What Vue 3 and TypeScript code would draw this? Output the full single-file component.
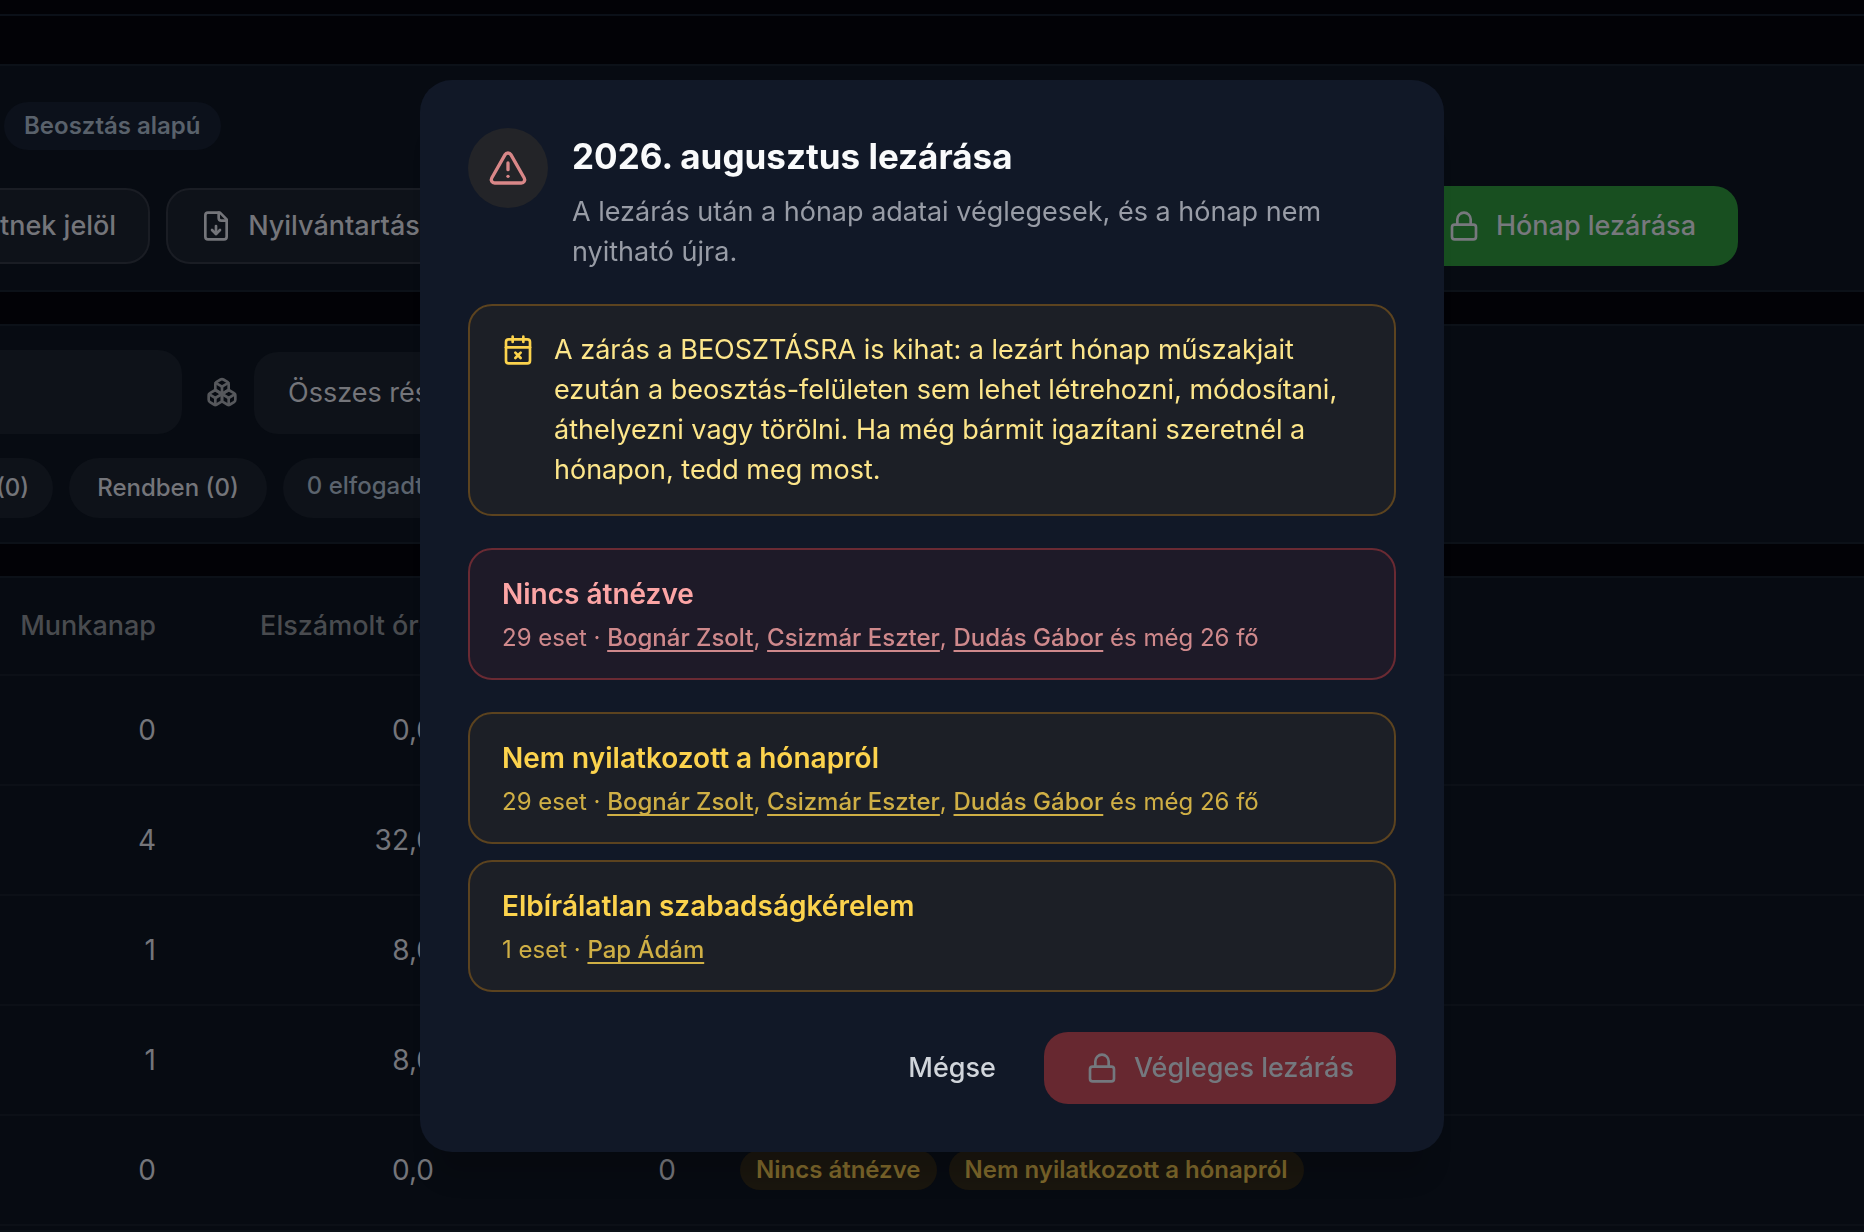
<script setup lang="ts">
interface Issue {
  title: string
  count: number
  people: string[]
  rest?: string
}

interface Row {
  days: number
  hours: string
  absences?: number
  flags?: string[]
}

const blocking: Issue[] = [
  {
    title: 'Nincs átnézve',
    count: 29,
    people: ['Bognár Zsolt', 'Csizmár Eszter', 'Dudás Gábor'],
    rest: 'és még 26 fő',
  },
]

const warnings: Issue[] = [
  {
    title: 'Nem nyilatkozott a hónapról',
    count: 29,
    people: ['Bognár Zsolt', 'Csizmár Eszter', 'Dudás Gábor'],
    rest: 'és még 26 fő',
  },
  { title: 'Elbírálatlan szabadságkérelem', count: 1, people: ['Pap Ádám'] },
]

const groups = [
  { kind: 'danger', issues: blocking },
  { kind: 'warning', issues: warnings },
]

const rows: Row[] = [
  { days: 0, hours: '0,0' },
  { days: 4, hours: '32,0' },
  { days: 1, hours: '8,0' },
  { days: 1, hours: '8,0' },
  {
    days: 0,
    hours: '0,0',
    absences: 0,
    flags: ['Nincs átnézve', 'Nem nyilatkozott a hónapról'],
  },
]
</script>

<template>
  <div class="page">
    <header class="topbar"></header>

    <main class="content">
      <section class="panel summary">
        <span class="tag">Beosztás alapú</span>
        <div class="actions">
          <button type="button" class="outline cut">tnek jelöl</button>
          <button type="button" class="outline export">
            <svg class="icon" viewBox="0 0 24 24" aria-hidden="true">
              <path d="M15 2H6a2 2 0 0 0-2 2v16a2 2 0 0 0 2 2h12a2 2 0 0 0 2-2V7Z" />
              <path d="M14 2v4a2 2 0 0 0 2 2h4" />
              <path d="M12 18v-6" />
              <path d="m9 15 3 3 3-3" />
            </svg>
            Nyilvántartás
          </button>
          <button type="button" class="close-month">
            <svg class="icon" viewBox="0 0 24 24" aria-hidden="true">
              <rect x="3" y="11" width="18" height="11" rx="2" />
              <path d="M7 11V7a5 5 0 0 1 10 0v4" />
            </svg>
            Hónap lezárása
          </button>
        </div>
      </section>

      <section class="panel filters">
        <div class="fields">
          <input type="text" class="search" aria-label="Keresés" />
          <svg class="icon boxes" viewBox="0 0 24 24" aria-hidden="true">
            <path d="M2.97 12.92A2 2 0 0 0 2 14.63v3.24a2 2 0 0 0 .97 1.71l3 1.8a2 2 0 0 0 2.06 0L12 19v-5.5l-5-3-4.03 2.42Z" />
            <path d="m7 16.5-4.74-2.85" />
            <path d="m7 16.5 5-3" />
            <path d="M7 16.5v5.17" />
            <path d="M12 13.5V19l3.97 2.38a2 2 0 0 0 2.06 0l3-1.8a2 2 0 0 0 .97-1.71v-3.24a2 2 0 0 0-.97-1.71L17 10.5l-5 3Z" />
            <path d="m17 16.5-5-3" />
            <path d="m17 16.5 4.74-2.85" />
            <path d="M17 16.5v5.17" />
            <path d="M7.97 4.42A2 2 0 0 0 7 6.13v4.37l5 3 5-3V6.13a2 2 0 0 0-.97-1.71l-3-1.8a2 2 0 0 0-2.06 0l-3 1.8Z" />
            <path d="M12 8 7.26 5.15" />
            <path d="m12 8 4.74-2.85" />
            <path d="M12 13.5V8" />
          </svg>
          <select class="department" aria-label="Részleg">
            <option>Összes részleg</option>
          </select>
        </div>
        <div class="pills">
          <button type="button" class="pill cut">(0)</button>
          <button type="button" class="pill">Rendben (0)</button>
          <span class="pill info">0 elfogadta</span>
        </div>
      </section>

      <section class="panel listing">
        <table>
          <colgroup>
            <col class="c-days" />
            <col class="c-hours" />
            <col class="c-absences" />
            <col />
          </colgroup>
          <thead>
            <tr>
              <th scope="col">Munkanap</th>
              <th scope="col">Elszámolt óra</th>
              <th scope="col"></th>
              <th scope="col"></th>
            </tr>
          </thead>
          <tbody>
            <tr v-for="(row, i) in rows" :key="i">
              <td>{{ row.days }}</td>
              <td>{{ row.hours }}</td>
              <td>{{ row.absences }}</td>
              <td>
                <div class="flags">
                  <span v-for="flag in row.flags" :key="flag" class="flag">{{ flag }}</span>
                </div>
              </td>
            </tr>
          </tbody>
        </table>
      </section>
    </main>

    <div class="overlay">
      <div class="dialog" role="dialog" aria-modal="true" aria-labelledby="dialog-title">
        <div class="intro">
          <span class="badge">
            <svg class="icon large" viewBox="0 0 24 24" aria-hidden="true">
              <path d="m21.73 18-8-14a2 2 0 0 0-3.48 0l-8 14A2 2 0 0 0 4 21h16a2 2 0 0 0 1.73-3" />
              <path d="M12 9v4" />
              <path d="M12 17h.01" />
            </svg>
          </span>
          <div class="intro-text">
            <h2 id="dialog-title">2026. augusztus lezárása</h2>
            <p>A lezárás után a hónap adatai véglegesek, és a hónap nem nyitható újra.</p>
          </div>
        </div>

        <div class="box warning notice">
          <svg class="icon" viewBox="0 0 24 24" aria-hidden="true">
            <path d="M8 2v4" />
            <path d="M16 2v4" />
            <rect x="3" y="4" width="18" height="18" rx="2" />
            <path d="M3 10h18" />
            <path d="m14 14-4 4" />
            <path d="m10 14 4 4" />
          </svg>
          <p>
            A zárás a BEOSZTÁSRA is kihat: a lezárt hónap műszakjait ezután a
            beosztás-felületen sem lehet létrehozni, módosítani, áthelyezni vagy törölni. Ha még
            bármit igazítani szeretnél a hónapon, tedd meg most.
          </p>
        </div>

        <div v-for="group in groups" :key="group.kind" class="group">
          <div v-for="issue in group.issues" :key="issue.title" class="box" :class="group.kind">
            <h3>{{ issue.title }}</h3>
            <p class="detail">
              {{ issue.count }} eset ·
              <template v-for="(name, i) in issue.people" :key="name"
                ><a href="#">{{ name }}</a
                ><template v-if="i < issue.people.length - 1">, </template></template
              >
              {{ issue.rest }}
            </p>
          </div>
        </div>

        <div class="footer">
          <button type="button" class="cancel">Mégse</button>
          <button type="button" class="confirm" disabled>
            <svg class="icon" viewBox="0 0 24 24" aria-hidden="true">
              <rect x="3" y="11" width="18" height="11" rx="2" />
              <path d="M7 11V7a5 5 0 0 1 10 0v4" />
            </svg>
            Végleges lezárás
          </button>
        </div>
      </div>
    </div>
  </div>
</template>

<style>
body {
  background: #020206;
}
</style>

<style scoped>
.page {
  display: flex;
  flex-direction: column;
  box-sizing: border-box;
  height: 100vh;
  overflow: hidden;
  background: #020206;
  color: #74757a;
  font-family: Inter, 'Noto Sans', sans-serif;
  font-size: 27px;
  line-height: 40px;
}

.page *,
.page *::before {
  box-sizing: border-box;
}

button,
input,
select {
  margin: 0;
  padding: 0;
  border: 0;
  background: none;
  color: inherit;
  font: inherit;
  white-space: nowrap;
}

h2,
h3,
p {
  margin: 0;
}

.icon {
  flex: none;
  width: 32px;
  height: 32px;
  fill: none;
  stroke: currentColor;
  stroke-width: 2;
  stroke-linecap: round;
  stroke-linejoin: round;
}

.icon.large {
  width: 40px;
  height: 40px;
}

.topbar {
  flex: none;
  height: 16px;
  border-bottom: 2px solid #0b1018;
}

.content {
  display: flex;
  flex: 1;
  flex-direction: column;
  gap: 32px;
  padding-top: 48px;
}

.panel {
  border-top: 2px solid #0c1118;
  border-bottom: 2px solid #0c1118;
  background: #070b12;
}

.summary {
  display: flex;
  flex-direction: column;
  align-items: flex-start;
  gap: 36px;
  padding: 36px 126px 24px 0;
}

.tag {
  margin-left: 4px;
  padding: 0 20px;
  border-radius: 24px;
  background: #0c111b;
  color: #59616b;
  font-size: 24px;
  font-weight: 600;
  line-height: 48px;
}

.actions {
  display: flex;
  align-items: center;
  align-self: stretch;
  gap: 16px;
}

.outline {
  display: flex;
  align-items: center;
  gap: 16px;
  height: 76px;
  padding: 0 32px;
  border: 2px solid #1a1d24;
  border-radius: 24px;
  background: #0e1219;
  font-weight: 500;
}

.outline.cut {
  padding-left: 0;
  border-left: 0;
  border-radius: 0 24px 24px 0;
}

.close-month {
  display: flex;
  align-items: center;
  gap: 16px;
  height: 80px;
  margin-left: auto;
  padding: 0 42px;
  border-radius: 24px;
  background: #184f20;
  color: #77787d;
  font-weight: 500;
}

.filters {
  display: flex;
  flex-direction: column;
  gap: 24px;
  padding: 24px 0;
}

.fields {
  display: flex;
  align-items: flex-end;
}

.search {
  width: 182px;
  height: 84px;
  border-radius: 0 24px 24px 0;
  background: #0e1219;
}

.boxes {
  align-self: center;
  margin: 0 16px 0 24px;
  color: #56585c;
}

.department {
  width: 400px;
  height: 82px;
  padding: 0 34px;
  border-radius: 24px;
  background: #0e1219;
  appearance: none;
}

.pills {
  display: flex;
  gap: 16px;
  margin-left: -4px;
}

.pill {
  height: 60px;
  padding: 0 28px;
  border-radius: 30px;
  background: #0e1219;
  font-size: 24px;
  font-weight: 500;
  line-height: 60px;
}

.pill.cut {
  padding: 0 24px 0 0;
  border-radius: 0 30px 30px 0;
}

.pill.info {
  padding: 0 24px;
  color: #5b636d;
  line-height: 56px;
}

.listing {
  flex: 1;
}

table {
  width: 100%;
  border-collapse: separate;
  border-spacing: 0;
  table-layout: fixed;
}

.c-days {
  width: 188px;
}

.c-hours {
  width: 278px;
}

.c-absences {
  width: 242px;
}

th,
td {
  padding: 0 32px 0 0;
  border-bottom: 2px solid #0c1017;
  text-align: right;
}

th {
  height: 98px;
  color: #494b4f;
  font-weight: 500;
  white-space: nowrap;
}

td {
  height: 110px;
  font-size: 28px;
}

td:last-child {
  padding-left: 32px;
}

.flags {
  display: flex;
  gap: 12px;
}

.flag {
  padding: 0 16px;
  border-radius: 20px;
  background: #1a160e;
  color: #7d672b;
  font-size: 24px;
  font-weight: 600;
  line-height: 40px;
}

.overlay {
  position: fixed;
  inset: 0;
  display: flex;
  align-items: center;
  justify-content: center;
}

.dialog {
  display: flex;
  flex-direction: column;
  gap: 32px;
  width: 100%;
  max-width: 1024px;
  padding: 48px;
  border-radius: 32px;
  background: #111827;
  box-shadow: 0 40px 24px -16px rgba(0, 0, 0, 0.15);
}

.intro {
  display: flex;
  gap: 24px;
}

.badge {
  display: flex;
  flex: none;
  align-items: center;
  justify-content: center;
  width: 80px;
  height: 80px;
  border-radius: 50%;
  background: #232428;
  color: #d98788;
}

.intro-text {
  display: flex;
  flex-direction: column;
  gap: 8px;
}

h2 {
  color: #f9fafb;
  font-size: 35px;
  font-weight: 700;
  line-height: 56px;
}

.intro-text p {
  color: #989ca6;
}

.box {
  padding: 24px 32px;
  border: 2px solid;
  border-radius: 24px;
}

.box.warning {
  border-color: #5c431f;
  background: #1c1f26;
  color: #fcd34d;
}

.box.danger {
  border-color: #6a2a33;
  background: #1e1a28;
  color: #fca5a5;
}

.notice {
  display: flex;
  gap: 20px;
}

.notice .icon {
  margin-top: 4px;
}

.notice p {
  color: #fde68a;
}

.group {
  display: flex;
  flex-direction: column;
  gap: 16px;
}

h3 {
  font-size: 28px;
  font-weight: 600;
  line-height: 40px;
}

.detail {
  margin-top: 8px;
  font-size: 24px;
  line-height: 32px;
  opacity: 0.8;
}

.detail a {
  color: inherit;
  font-weight: 500;
  text-decoration: underline;
  text-decoration-skip-ink: none;
  text-decoration-thickness: 2px;
  text-underline-offset: 4px;
}

.footer {
  display: flex;
  justify-content: flex-end;
  gap: 16px;
  margin-top: 8px;
}

.footer button {
  display: flex;
  align-items: center;
  gap: 16px;
  height: 72px;
  border-radius: 24px;
  font-weight: 500;
}

.cancel {
  padding: 0 32px;
  color: #d1d5db;
}

.footer .confirm {
  padding: 0 42px;
  background: #672830;
  color: #74787e;
}
</style>
